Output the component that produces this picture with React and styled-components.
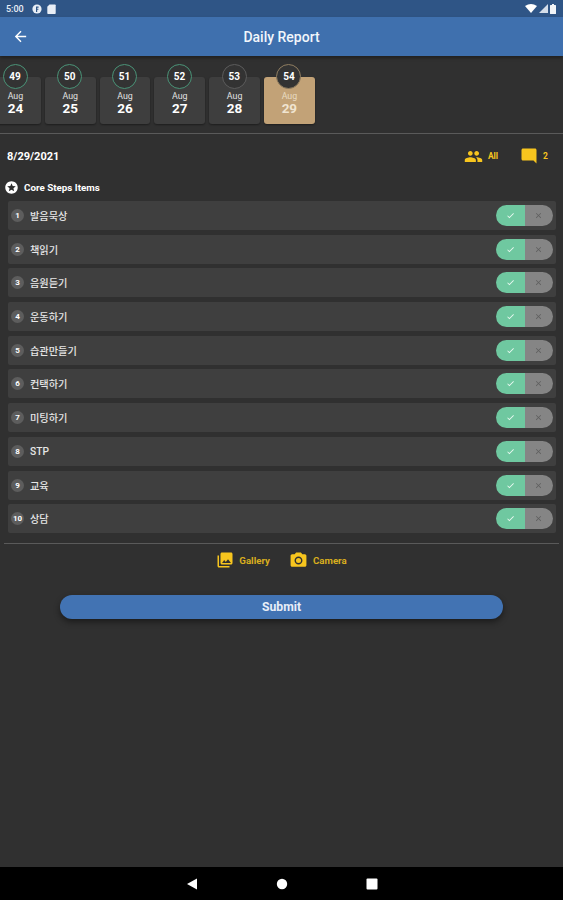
import { createGlobalStyle, styled } from "styled-components";
import {
  MdArrowBack,
  MdCheck,
  MdClose,
  MdModeComment,
  MdPeople,
  MdPhotoCamera,
  MdPhotoLibrary,
  MdStars,
} from "react-icons/md";

const days = [
  { no: 49, day: 24, done: true },
  { no: 50, day: 25, done: true },
  { no: 51, day: 26, done: true },
  { no: 52, day: 27, done: true },
  { no: 53, day: 28 },
  { no: 54, day: 29, active: true },
];

const items = ["발음묵상", "책읽기", "음원듣기", "운동하기", "습관만들기", "컨택하기", "미팅하기", "STP", "교육", "상담"];

const App = () => {
  return (
    <Page>
      <GlobalStyle />
      <StatusBar>
        <StatusGroup>
          <Clock>5:00</Clock>
          <svg width="10" height="10" viewBox="0 0 10 10">
            <circle cx="5" cy="5" r="4.6" fill="#e8eef6" />
            <path d="M4 2.5h2.6v1.2H5.2v1H6.4v1.1H5.2V8H4z" fill="#2f5586" />
          </svg>
          <svg width="9" height="10" viewBox="0 0 9 10">
            <path d="M2.5 0.5H8a.7.7 0 0 1 .7.7v8a.7.7 0 0 1-.7.7H1a.7.7 0 0 1-.7-.7V2.7z" fill="#e8eef6" />
          </svg>
        </StatusGroup>
        <StatusGroup>
          <svg width="12" height="9" viewBox="0 0 12 9">
            <path d="M0 2Q6-2 12 2L6 9z" fill="#fff" />
          </svg>
          <svg width="9" height="9" viewBox="0 0 9 9">
            <path d="M9 0v9H0z" fill="#d5deea" />
          </svg>
          <svg width="6" height="10" viewBox="0 0 6 10">
            <path d="M2 0h2v1h1.4a.6.6 0 0 1 .6.6v7.8a.6.6 0 0 1-.6.6H.6a.6.6 0 0 1-.6-.6V1.6A.6.6 0 0 1 .6 1H2z" fill="#f1f4f8" />
          </svg>
        </StatusGroup>
      </StatusBar>
      <AppBar>
        <BackButton>
          <MdArrowBack size={17} />
        </BackButton>
        <AppTitle>Daily Report</AppTitle>
      </AppBar>
      <Main>
        <DayStrip>
          {days.map((item) => (
            <DayCard key={item.no} $active={item.active}>
              <DayBadge $done={item.done} $active={item.active}>
                {item.no}
              </DayBadge>
              <Month>Aug</Month>
              <DayNumber>{item.day}</DayNumber>
            </DayCard>
          ))}
        </DayStrip>
        <Divider />
        <DateRow>
          <DateText>8/29/2021</DateText>
          <DateMeta>
            <MetaItem>
              <MdPeople size={19} />
              All
            </MetaItem>
            <MetaItem>
              <MdModeComment size={18} />2
            </MetaItem>
          </DateMeta>
        </DateRow>
        <SectionTitle>
          <MdStars size={15} />
          Core Steps Items
        </SectionTitle>
        <StepList>
          {items.map((name, index) => (
            <StepRow key={name}>
              <StepNumber>{index + 1}</StepNumber>
              <StepName>{name}</StepName>
              <Toggle>
                <ToggleYes>
                  <MdCheck size={9} />
                </ToggleYes>
                <ToggleNo>
                  <MdClose size={9} />
                </ToggleNo>
              </Toggle>
            </StepRow>
          ))}
        </StepList>
        <BottomDivider />
        <AttachRow>
          <AttachItem>
            <MdPhotoLibrary size={18} />
            Gallery
          </AttachItem>
          <AttachItem>
            <MdPhotoCamera size={19} />
            Camera
          </AttachItem>
        </AttachRow>
        <SubmitButton>Submit</SubmitButton>
      </Main>
      <NavBar>
        <svg width="12" height="12" viewBox="0 0 12 12">
          <path d="M1 6L11 0.5V11.5z" fill="#fff" />
        </svg>
        <svg width="12" height="12" viewBox="0 0 12 12">
          <circle cx="6" cy="6" r="5.2" fill="#fff" />
        </svg>
        <svg width="12" height="12" viewBox="0 0 12 12">
          <rect x="0.5" y="0.5" width="11" height="11" rx="1" fill="#fff" />
        </svg>
      </NavBar>
    </Page>
  );
};

const GlobalStyle = createGlobalStyle`
  html, body {
    margin: 0;
    padding: 0;
    background: #303030;
  }
  * {
    box-sizing: border-box;
  }
`;

const Page = styled.div`
  width: 563px;
  height: 900px;
  display: flex;
  flex-direction: column;
  overflow: hidden;
  background: #303030;
  color: #fff;
  font-family: Roboto, "Noto Sans CJK KR", sans-serif;
`;

const StatusBar = styled.div`
  height: 17px;
  flex-shrink: 0;
  display: flex;
  align-items: center;
  justify-content: space-between;
  padding: 0 6px;
  background: #2f5586;
`;

const StatusGroup = styled.div`
  display: flex;
  align-items: center;
  gap: 5px;

  &:last-child {
    gap: 2px;
    padding-right: 1px;
  }
`;

const Clock = styled.span`
  font-size: 9px;
  font-weight: 500;
  color: #e8eef6;
  margin-right: 3px;
`;

const AppBar = styled.div`
  height: 39px;
  flex-shrink: 0;
  position: relative;
  display: flex;
  align-items: center;
  justify-content: center;
  padding-top: 1px;
  background: #3f70ae;
  box-shadow: 0 2px 3px rgba(0, 0, 0, 0.35);
  z-index: 1;
`;

const BackButton = styled.div`
  position: absolute;
  left: 12px;
  top: 11px;
  display: flex;
  color: #fff;
`;

const AppTitle = styled.div`
  font-size: 14px;
  font-weight: 500;
  color: #f2f6fb;
`;

const Main = styled.div`
  flex: 1;
  display: flex;
  flex-direction: column;
`;

const DayStrip = styled.div`
  display: flex;
  gap: 4px;
  margin-left: -10px;
  padding-top: 21px;
`;

const DayCard = styled.div`
  width: 50.8px;
  height: 47px;
  flex-shrink: 0;
  position: relative;
  display: flex;
  flex-direction: column;
  align-items: center;
  padding-top: 14px;
  border-radius: 3px;
  background: ${(p) => (p.$active ? "#c2a277" : "#3e3e3e")};
  color: ${(p) => (p.$active ? "#f0e4d0" : "#fff")};
  box-shadow: 0 1px 2px rgba(0, 0, 0, 0.4);
`;

const DayBadge = styled.div`
  position: absolute;
  top: -13px;
  left: 12.5px;
  width: 25px;
  height: 25px;
  display: flex;
  align-items: center;
  justify-content: center;
  border-radius: 50%;
  border: 1.7px solid ${(p) => (p.$done ? "#4a9377" : p.$active ? "#8f7d60" : "#5c5c5c")};
  background: #333;
  color: #fff;
  font-size: 10px;
  font-weight: 700;
`;

const Month = styled.div`
  font-size: 8.8px;
  line-height: 10px;
  color: inherit;
  opacity: 0.85;
`;

const DayNumber = styled.div`
  font-size: 13.5px;
  line-height: 15px;
  font-weight: 700;
`;

const Divider = styled.div`
  height: 1px;
  margin-top: 9px;
  background: #5a5a5a;
`;

const DateRow = styled.div`
  display: flex;
  align-items: center;
  justify-content: space-between;
  height: 20px;
  margin-top: 12px;
  padding: 0 15px 0 7px;
`;

const DateText = styled.div`
  font-size: 11px;
  font-weight: 700;
`;

const DateMeta = styled.div`
  display: flex;
  gap: 22px;
`;

const MetaItem = styled.div`
  display: flex;
  align-items: center;
  gap: 5px;
  font-size: 8.5px;
  font-weight: 700;
  color: #f7c51e;
`;

const SectionTitle = styled.div`
  display: flex;
  align-items: center;
  gap: 5px;
  height: 16px;
  margin-top: 13px;
  padding-left: 4px;
  font-size: 9.8px;
  font-weight: 700;
`;

const StepList = styled.div`
  display: flex;
  flex-direction: column;
  gap: 4.7px;
  margin-top: 6px;
  padding: 0 7px 0 8px;
`;

const StepRow = styled.div`
  height: 29px;
  display: flex;
  align-items: center;
  padding: 0 3px 0 3px;
  border-radius: 2px;
  background: #3f3f3f;
`;

const StepNumber = styled.div`
  width: 13px;
  height: 13px;
  display: flex;
  align-items: center;
  justify-content: center;
  border-radius: 50%;
  background: #5d5d5d;
  font-size: 8px;
  font-weight: 700;
`;

const StepName = styled.div`
  flex: 1;
  margin-left: 6px;
  font-size: 10.2px;
  font-weight: 500;
  color: #e6e6e6;
`;

const Toggle = styled.div`
  width: 57px;
  height: 21px;
  display: flex;
  overflow: hidden;
  border-radius: 11px;
`;

const ToggleYes = styled.div`
  flex: 1;
  display: flex;
  align-items: center;
  justify-content: center;
  background: #6fc8a0;
  color: #eafaf2;
`;

const ToggleNo = styled.div`
  flex: 1;
  display: flex;
  align-items: center;
  justify-content: center;
  background: #858585;
  color: #5f5f5f;
`;

const BottomDivider = styled.div`
  height: 1px;
  margin: 10px 4px 0;
  background: #5a5a5a;
`;

const AttachRow = styled.div`
  display: flex;
  justify-content: center;
  gap: 19px;
  margin-top: 6px;
  height: 20px;
`;

const AttachItem = styled.div`
  display: flex;
  align-items: center;
  gap: 5px;
  font-size: 9.7px;
  font-weight: 700;
  color: #d9ae1e;

  svg {
    color: #f7c51e;
  }
`;

const SubmitButton = styled.div`
  height: 24px;
  margin: 25px 60px 0;
  display: flex;
  align-items: center;
  justify-content: center;
  border-radius: 12px;
  background: #4273b3;
  box-shadow: 0 3px 6px rgba(0, 0, 0, 0.45);
  font-size: 12.2px;
  font-weight: 700;
  color: #e8eef8;
`;

const NavBar = styled.div`
  height: 33px;
  flex-shrink: 0;
  display: flex;
  align-items: center;
  justify-content: center;
  gap: 78px;
  background: #000;
`;

export default App;
